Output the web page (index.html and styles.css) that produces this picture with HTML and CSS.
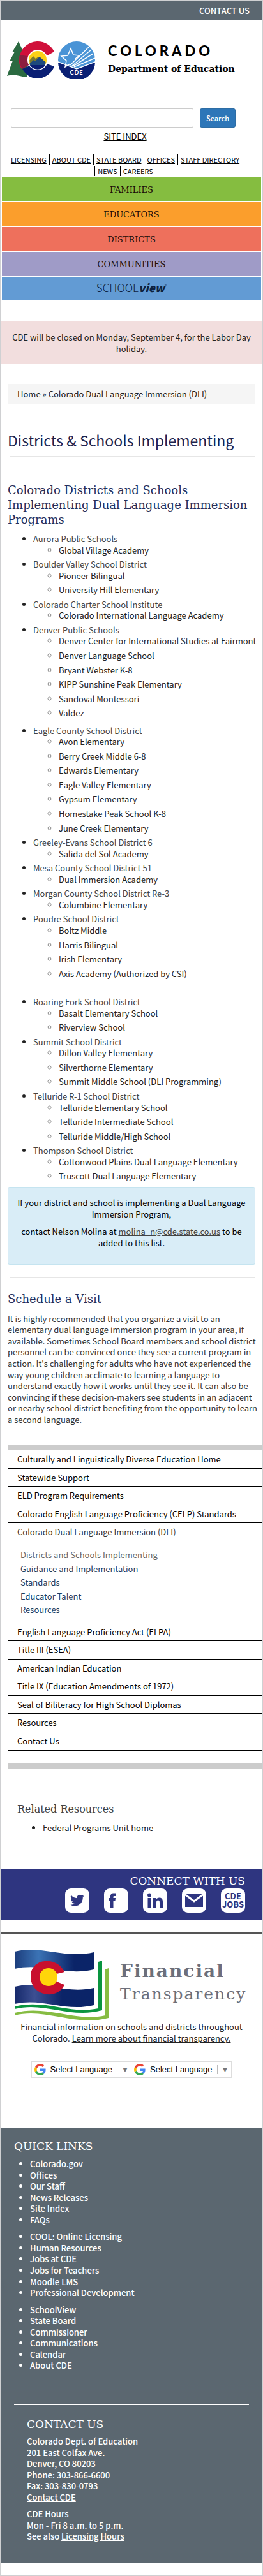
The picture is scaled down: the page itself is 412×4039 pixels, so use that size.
FILE: index.html
```html
<!DOCTYPE html>
<html lang="en">
<head>
<meta charset="utf-8">
<meta name="viewport" content="width=device-width, initial-scale=1">
<title>Districts &amp; Schools Implementing | CDE</title>
<link rel="stylesheet" href="styles.css">
</head>
<body>
<div class="page">
  <div class="topbar"><a href="#contact">CONTACT US</a></div>

  <header class="masthead">
    <a class="brand" href="#" aria-label="Colorado Department of Education">
      <svg class="brand-mark" viewBox="0 0 148 60" width="148" height="60" aria-hidden="true">
        <path fill="#2b6a41" d="M18 1 8 18l4-1L4 32l5-1L0 55c8-2 14-1 20 0l4 1h8V22l-5-6-2 0z"/>
        <path fill="#d0103a" d="M47 1a29 29 0 0 0-28 29c0 6 1 10 4 14l24-14 18-8 9-5A29 29 0 0 0 47 1z"/>
        <path fill="#8c1d3f" d="M20 22a29 29 0 0 0 4 22l10-6-3-14z"/>
        <path fill="#0a1f74" d="M24 44c5 9 14 15 23 15a29 29 0 0 0 27-19l-12-4-15-2z"/>
        <circle cx="48" cy="30" r="16" fill="#fff"/>
        <circle cx="48" cy="30" r="14" fill="#fbd116"/>
        <path fill="#7c7a2c" d="M35 31l6-7 4 4 4-3 7 5 4 4-3 5H38z"/>
        <path fill="#1d4a7d" d="M35 36l7-6 2 2 7-7 10 9-3 6-8 4h-6l-7-4z"/>
        <path fill="#0a1f74" d="M36 38h24a14 14 0 0 1-24 0z"/>
        <circle cx="109" cy="30" r="29" fill="#4a94d6"/>
        <path fill="#0a1f74" d="M80 33l29 11 29-11a29 29 0 0 1-58 0z"/>
        <path fill="none" stroke="#fff" stroke-width="1.5" d="M80 33l29 11 29-11"/>
        <path fill="none" stroke="#fff" stroke-width="1.5" d="M99 36l-8 5 2-10-8-7 10-1 5-11 4 10 9 1-7 6"/>
        <path fill="none" stroke="#fff" stroke-width="1.5" d="M99 38 129 9M101 40l31-26M103 40l32-20M105 41l33-14"/>
        <text class="brand-cde" x="109" y="53" text-anchor="middle">CDE</text>
        <path stroke="#777" stroke-width="1" d="M147.500 0v59"/>
      </svg>
      <span class="brand-words">
        <span class="brand-state">COLORADO</span>
        <span class="brand-dept">Department of Education</span>
      </span>
    </a>
    <form class="search">
      <input class="search-box" type="text" aria-label="Search">
      <button class="search-btn" type="submit">Search</button>
    </form>
    <p class="site-index"><a href="#">SITE INDEX</a></p>
    <nav class="util">
      <a href="#">LICENSING</a><a href="#">ABOUT CDE</a><a href="#">STATE BOARD</a><a href="#">OFFICES</a><a href="#">STAFF DIRECTORY</a><a href="#">NEWS</a><a href="#">CAREERS</a>
    </nav>
  </header>

  <nav class="audience">
    <a class="families" href="#">FAMILIES</a>
    <a class="educators" href="#">EDUCATORS</a>
    <a class="districts" href="#">DISTRICTS</a>
    <a class="communities" href="#">COMMUNITIES</a>
    <a class="schoolview" href="#">SCHOOL<b>view</b><sup>®</sup></a>
  </nav>

  <div class="notice">CDE will be closed on Monday, September 4, for the Labor Day holiday.</div>

  <main class="content">
    <div class="crumbs"><a href="#">Home</a> » <a href="#">Colorado Dual Language Immersion (DLI)</a></div>
    <h1>Districts &amp; Schools Implementing</h1>
    <hr>
    <h2 class="programs">Colorado Districts and Schools Implementing Dual Language Immersion Programs</h2>
    <ul class="district-list">
      <li>Aurora Public Schools
        <ul><li>Global Village Academy</li></ul></li>
      <li>Boulder Valley School District
        <ul><li>Pioneer Bilingual</li><li>University Hill Elementary</li></ul></li>
      <li>Colorado Charter School Institute
        <ul><li>Colorado International Language Academy</li></ul></li>
      <li class="spaced">Denver Public Schools
        <ul><li>Denver Center for International Studies at Fairmont</li><li>Denver Language School</li><li>Bryant Webster K-8</li><li>KIPP Sunshine Peak Elementary</li><li>Sandoval Montessori</li><li>Valdez</li></ul></li>
      <li>Eagle County School District
        <ul><li>Avon Elementary</li><li>Berry Creek Middle 6-8</li><li>Edwards Elementary</li><li>Eagle Valley Elementary</li><li>Gypsum Elementary</li><li>Homestake Peak School K-8</li><li>June Creek Elementary</li></ul></li>
      <li>Greeley-Evans School District 6
        <ul><li>Salida del Sol Academy</li></ul></li>
      <li>Mesa County School District 51
        <ul><li>Dual Immersion Academy</li></ul></li>
      <li>Morgan County School District Re-3
        <ul><li>Columbine Elementary</li></ul></li>
      <li class="split">Poudre School District
        <ul><li>Boltz Middle</li><li>Harris Bilingual</li><li>Irish Elementary</li><li>Axis Academy (Authorized by CSI)</li></ul></li>
      <li>Roaring Fork School District
        <ul><li>Basalt Elementary School</li><li>Riverview School</li></ul></li>
      <li>Summit School District
        <ul><li>Dillon Valley Elementary</li><li>Silverthorne Elementary</li><li>Summit Middle School (DLI Programming)</li></ul></li>
      <li>Telluride R-1 School District
        <ul><li>Telluride Elementary School</li><li>Telluride Intermediate School</li><li>Telluride Middle/High School</li></ul></li>
      <li>Thompson School District
        <ul><li>Cottonwood Plains Dual Language Elementary</li><li>Truscott Dual Language Elementary</li></ul></li>
    </ul>
    <div class="info">
      <p>If your district and school is implementing a Dual Language Immersion Program,</p>
      <p>contact Nelson Molina at <a href="#">molina_n@cde.state.co.us</a> to be added to this list.</p>
    </div>
    <hr>
    <h2 class="visit-title">Schedule a Visit</h2>
    <p class="visit">It is highly recommended that you organize a visit to an elementary dual language immersion program in your area, if available. Sometimes School Board members and school district personnel can be convinced once they see a current program in action. It's challenging for adults who have not experienced the way young children acclimate to learning a language to understand exactly how it works until they see it. It can also be convincing if these decision-makers see students in an adjacent or nearby school district benefiting from the opportunity to learn a second language.</p>
  </main>

  <nav class="side">
    <ul>
      <li><a href="#">Culturally and Linguistically Diverse Education Home</a></li>
      <li><a href="#">Statewide Support</a></li>
      <li><a href="#">ELD Program Requirements</a></li>
      <li><a href="#">Colorado English Language Proficiency (CELP) Standards</a></li>
      <li><a class="open" href="#">Colorado Dual Language Immersion (DLI)</a>
        <ul class="side-sub">
          <li><a class="current" href="#">Districts and Schools Implementing</a></li>
          <li><a href="#">Guidance and Implementation</a></li>
          <li><a href="#">Standards</a></li>
          <li><a href="#">Educator Talent</a></li>
          <li><a href="#">Resources</a></li>
        </ul></li>
      <li><a href="#">English Language Proficiency Act (ELPA)</a></li>
      <li><a href="#">Title III (ESEA)</a></li>
      <li><a href="#">American Indian Education</a></li>
      <li><a href="#">Title IX (Education Amendments of 1972)</a></li>
      <li><a href="#">Seal of Biliteracy for High School Diplomas</a></li>
      <li><a href="#">Resources</a></li>
      <li><a href="#">Contact Us</a></li>
    </ul>
  </nav>

  <section class="related">
    <h3>Related Resources</h3>
    <ul><li><a href="#">Federal Programs Unit home</a></li></ul>
  </section>

  <section class="connect">
    <h3>CONNECT WITH US</h3>
    <div class="social">
      <a href="#" aria-label="Twitter"><svg viewBox="0 0 38 38" width="38" height="38"><rect width="38" height="38" rx="9" fill="#fff"/><path fill="#2e3580" transform="translate(8 7) scale(1.375)" d="M5.026 15c6.038 0 9.341-5.003 9.341-9.334q.002-.211-.006-.422A6.700 6.700 0 0 0 16 3.542a6.700 6.700 0 0 1-1.889.518 3.300 3.300 0 0 0 1.447-1.817 6.500 6.500 0 0 1-2.087.793A3.286 3.286 0 0 0 7.875 6.030a9.320 9.320 0 0 1-6.767-3.429 3.290 3.290 0 0 0 1.018 4.382A3.300 3.300 0 0 1 .64 6.575v.045a3.290 3.290 0 0 0 2.632 3.218 3.200 3.200 0 0 1-.865.115 3 3 0 0 1-.614-.057 3.280 3.280 0 0 0 3.067 2.277A6.600 6.600 0 0 1 .78 13.580a6 6 0 0 1-.78-.045A9.340 9.340 0 0 0 5.026 15"/></svg></a>
      <a href="#" aria-label="Facebook"><svg viewBox="0 0 38 38" width="38" height="38"><rect width="38" height="38" rx="9" fill="#fff"/><path fill="#2e3580" d="M10 30V19H7v-4h3v-2.500C10 9 12 7.500 15 7.500h3V12h-2c-1 0-1.500.5-1.500 1.300V15H18l-.5 4h-3v11z"/></svg></a>
      <a href="#" aria-label="LinkedIn"><svg viewBox="0 0 38 38" width="38" height="38"><rect width="38" height="38" rx="9" fill="#fff"/><circle cx="10" cy="10.500" r="3" fill="#2e3580"/><path fill="#2e3580" d="M7.500 15h5v15h-5zM16 15h4.700v2c1-1.500 2.600-2.400 4.800-2.400 4 0 5.500 2.600 5.500 6.400v9h-5v-8c0-2.100-.6-3.400-2.400-3.400-1.900 0-2.600 1.400-2.600 3.400v8h-5z"/></svg></a>
      <a href="#" aria-label="Email"><svg viewBox="0 0 38 38" width="38" height="38"><rect width="38" height="38" rx="9" fill="#fff"/><rect x="5" y="8" width="28" height="21" fill="#2e3580"/><path d="M4 9l15 11L34 9" fill="none" stroke="#fff" stroke-width="3"/></svg></a>
      <a class="jobs" href="#">CDE<br>JOBS</a>
    </div>
  </section>

  <section class="finance">
    <a class="ft-logo" href="#" aria-label="Financial Transparency">
      <svg viewBox="0 0 148 114" width="148" height="114" aria-hidden="true">
        <defs>
          <linearGradient id="sky" x1="0" x2="1"><stop offset="0" stop-color="#1c3d7c"/><stop offset=".3" stop-color="#3b73b5"/><stop offset=".75" stop-color="#0b2468"/></linearGradient>
          <linearGradient id="sea" x1="0" x2="1"><stop offset="0" stop-color="#15296b"/><stop offset=".25" stop-color="#3d4f92"/><stop offset=".6" stop-color="#0b2468"/></linearGradient>
        </defs>
        <path fill="url(#sky)" d="M1 5C40-6 80 17 125 6v27C80 44 45 22 1 32z"/>
        <path fill="url(#sea)" d="M1 60c44-10 79 12 124 2v27c-45 11-80-12-124-2z"/>
        <path fill="#c8102e" d="M79 37C68 12 26 14 26 44c0 31 42 38 53 13L67 52 57 43l10-3z"/>
        <circle cx="54" cy="45" r="14" fill="#ffd60a"/>
        <path fill="#0a9540" d="M132 21l6-2v78c-50 14-90-14-137-2v-4c48-12 88 13 131 3z"/>
        <path fill="#86bc42" d="M143 33l5-2v78c-55 14-97-16-147-4v-4c50-13 96 15 142 4z"/>
      </svg>
      <span class="ft-words"><b>Financial</b><span>Transparency</span></span>
    </a>
    <p>Financial information on schools and districts throughout Colorado. <a href="#">Learn more about financial transparency.</a></p>
    <div class="translate">
      <button type="button"><svg viewBox="0 0 48 48" width="18" height="18" aria-hidden="true"><path fill="#ea4335" d="M24 9.500c3.540 0 6.710 1.220 9.210 3.600l6.850-6.850C35.900 2.380 30.470 0 24 0 14.620 0 6.510 5.380 2.560 13.220l7.980 6.190C12.430 13.720 17.740 9.500 24 9.500z"/><path fill="#4285f4" d="M46.980 24.550c0-1.570-.15-3.090-.38-4.550H24v9.020h12.940c-.58 2.960-2.260 5.480-4.780 7.180l7.730 6c4.510-4.180 7.090-10.360 7.090-17.650z"/><path fill="#fbbc05" d="M10.530 28.590c-.48-1.450-.76-2.990-.76-4.590s.27-3.140.76-4.590l-7.980-6.190C.92 16.460 0 20.120 0 24c0 3.880.92 7.540 2.560 10.780l7.970-6.190z"/><path fill="#34a853" d="M24 48c6.480 0 11.930-2.130 15.890-5.810l-7.730-6c-2.150 1.450-4.920 2.300-8.160 2.300-6.260 0-11.570-4.220-13.470-9.910l-7.980 6.190C6.510 42.620 14.620 48 24 48z"/></svg><span class="lang">Select Language</span><span class="arrow">▼</span></button>
      <button type="button"><svg viewBox="0 0 48 48" width="18" height="18" aria-hidden="true"><path fill="#ea4335" d="M24 9.500c3.540 0 6.710 1.220 9.210 3.600l6.850-6.850C35.900 2.380 30.470 0 24 0 14.620 0 6.510 5.380 2.560 13.220l7.980 6.190C12.430 13.720 17.740 9.500 24 9.500z"/><path fill="#4285f4" d="M46.980 24.550c0-1.570-.15-3.090-.38-4.550H24v9.020h12.940c-.58 2.960-2.260 5.480-4.780 7.180l7.730 6c4.510-4.180 7.090-10.360 7.090-17.650z"/><path fill="#fbbc05" d="M10.530 28.590c-.48-1.450-.76-2.990-.76-4.590s.27-3.140.76-4.590l-7.980-6.190C.92 16.460 0 20.120 0 24c0 3.880.92 7.540 2.560 10.780l7.970-6.190z"/><path fill="#34a853" d="M24 48c6.480 0 11.930-2.130 15.890-5.810l-7.730-6c-2.150 1.450-4.920 2.300-8.160 2.300-6.260 0-11.570-4.220-13.470-9.910l-7.980 6.190C6.510 42.620 14.620 48 24 48z"/></svg><span class="lang">Select Language</span><span class="arrow">▼</span></button>
    </div>
  </section>

  <footer class="footer" id="contact">
    <h3>QUICK LINKS</h3>
    <ul>
      <li><a href="#">Colorado.gov</a></li><li><a href="#">Offices</a></li><li><a href="#">Our Staff</a></li><li><a href="#">News Releases</a></li><li><a href="#">Site Index</a></li><li><a href="#">FAQs</a></li>
    </ul>
    <ul>
      <li><a href="#">COOL: Online Licensing</a></li><li><a href="#">Human Resources</a></li><li><a href="#">Jobs at CDE</a></li><li><a href="#">Jobs for Teachers</a></li><li><a href="#">Moodle LMS</a></li><li><a href="#">Professional Development</a></li>
    </ul>
    <ul>
      <li><a href="#">SchoolView</a></li><li><a href="#">State Board</a></li><li><a href="#">Commissioner</a></li><li><a href="#">Communications</a></li><li><a href="#">Calendar</a></li><li><a href="#">About CDE</a></li>
    </ul>
    <div class="address">
      <h3>CONTACT US</h3>
      <p>Colorado Dept. of Education<br>201 East Colfax Ave.<br>Denver, CO 80203<br>Phone: 303-866-6600<br>Fax: 303-830-0793<br><a href="#">Contact CDE</a></p>
      <p>CDE Hours<br>Mon - Fri 8 a.m. to 5 p.m.<br>See also <a href="#">Licensing Hours</a></p>
    </div>
  </footer>
</div>
</body>
</html>
```
FILE: styles.css
```css
* { box-sizing: border-box; }

body {
  margin: 0;
  background: #fff;
  color: #222;
  font-family: "Noto Sans CJK SC", "Noto Sans", sans-serif;
  font-size: 13px;
  line-height: 1.35;
}

a { color: inherit; text-decoration: none; }
p, h1, h2, h3, ul { margin: 0; padding: 0; }

.page { border: 2px solid #cfd0d2; padding-bottom: 19px; }

h2, h3, .audience, .brand-dept, .ft-words {
  font-family: "DejaVu Serif", "Liberation Serif", serif;
}

/* Top bar and masthead */
.topbar {
  padding: 6px 19px;
  background: #5b6770;
  color: #fff;
  font-weight: 500;
  text-align: right;
}

.masthead { padding: 32px 9px 0; }

.brand { display: flex; gap: 10px; color: #000; }
.brand-mark { flex: none; }
.brand-cde { fill: #fff; font: 700 9px Lato, sans-serif; letter-spacing: 1px; }
.brand-words { display: flex; flex-direction: column; gap: 6px; padding-top: 3px; white-space: nowrap; }
.brand-state { font: 900 22px/26px Lato, sans-serif; letter-spacing: 5px; }
.brand-dept { font-size: 14px; line-height: 18px; font-weight: 700; }

.search { display: flex; gap: 10px; margin: 46px 32px 0 6px; }
.search-box {
  flex: 1;
  min-width: 0;
  height: 30px;
  border: 1px solid #ccc;
  border-radius: 2px;
}
.search-btn {
  width: 56px;
  border: 1px solid #2e6da4;
  border-radius: 3px;
  background: #2d76b8;
  color: #fff;
  font: 500 11px/18px "Noto Sans CJK SC", sans-serif;
  padding: 0;
}

.site-index { margin: 5px 20px 0 0; text-align: center; color: #000; }
.site-index a, .util a { text-decoration: underline; }

.util {
  display: flex;
  flex-wrap: wrap;
  justify-content: center;
  margin: 20px 12px 0 -8px;
  color: #000;
  font-size: 11px;
  line-height: 16px;
  row-gap: 2px;
}
.util a { padding: 0 4px; }
.util a + a { border-left: 1px solid #000; }

/* Audience bars */
.audience { display: grid; gap: 2px; padding: 2px 1px 0; }
.audience a {
  padding: 10px 0 7px;
  color: #1c0d08;
  font-size: 13px;
  line-height: 20px;
  text-align: center;
}
.families { background: #85bd40; }
.educators { background: #fb9e2c; }
.districts { background: #ee705c; }
.communities { background: #9f9bc7; }
.audience .schoolview {
  padding: 7px 0 10px;
  background: #629bd4;
  color: #0d2240;
  font: 300 17px/20px "Noto Sans CJK SC", sans-serif;
}
.schoolview b { font-weight: 900; font-style: italic; }
.schoolview sup { font-size: 7px; line-height: 1; }

.notice {
  margin-top: 33px;
  padding: 16px 14px 15px;
  background: #f2dede;
  line-height: 18px;
  text-align: center;
}

/* Main column */
.content { padding: 31px 10px 0; }

.crumbs { padding: 7px 15px; background: #f5f5f5; line-height: 18px; }

h1 {
  margin-top: 41px;
  color: #1c2350;
  font-size: 23px;
  line-height: 30px;
  font-weight: 400;
}
hr { height: 1px; margin: 10px 0 0 3px; border: 0; background: #e6e6e6; }

h2 { color: #262f5c; font-size: 18px; line-height: 23px; font-weight: 400; }
.programs { margin-top: 41px; }

.district-list { margin: 10px -10px 0 0; padding-left: 40px; color: #444; }
.district-list > li::marker { color: #222; }
.district-list ul { padding-left: 40px; color: #222; list-style: circle; }
.district-list ul li { padding-bottom: 5px; }
.district-list ul li::marker { color: #888; }
.district-list .spaced { padding-bottom: 5px; }
.district-list .split { padding-bottom: 22px; }

.info {
  margin-top: 3px;
  padding: 15px 10px;
  border: 1px solid #c5e4f0;
  border-radius: 3px;
  background: #d9edf7;
  color: #000;
  line-height: 18px;
  text-align: center;
}
.info p { margin-bottom: 9px; }
.info a { color: #444; text-decoration: underline; }
.info + hr { margin-top: 20px; }

.visit-title { margin-top: 21px; }
.visit { margin: 11px -10px 0 0; color: #333; }

/* Section navigation */
.side {
  margin: 31px 0 0 10px;
  padding-bottom: 20px;
  border: solid #ccc;
  border-width: 9px 0;
  color: #000;
}
.side ul { list-style: none; }
.side > ul > li { padding: 5px 15px; border-bottom: 1px solid #000; }
.side .open { color: #333; }
.side .side-sub { padding: 16px 5px 4px; color: #1d3d5f; }
.side-sub li { padding: 2px 0; }
.side-sub .current { color: #666; }

.related { padding: 51px 25px 57px; }
.related h3 { color: #444; font-size: 16px; line-height: 24px; font-weight: 400; }
.related ul { margin-top: 8px; padding-left: 40px; }
.related a { text-decoration: underline; }

/* Connect band */
.connect { padding: 7px 26px 11px; background: #2e3580; color: #fff; }
.connect h3 { font-size: 17px; line-height: 23px; font-weight: 400; text-align: right; }
.social { display: flex; justify-content: flex-end; gap: 23px; }
.social svg { display: block; }
.jobs {
  width: 38px;
  height: 38px;
  padding-top: 5px;
  border-radius: 9px;
  background: #fff;
  color: #2e3580;
  font-size: 13px;
  line-height: 13px;
  font-weight: 700;
  text-align: center;
}

/* Financial transparency */
.finance {
  margin-top: 20px;
  padding: 22px 20px 79px;
  border-top: 3px solid #555;
  text-align: center;
  line-height: 18px;
}
.ft-logo { display: flex; gap: 18px; }
.ft-logo svg { flex: none; }
.ft-words {
  display: flex;
  flex-direction: column;
  padding-top: 18px;
  color: #6c6f7b;
  font-size: 25px;
  line-height: 36px;
  letter-spacing: 2px;
  text-align: left;
}
.ft-words b { font-size: 28px; }
.finance p a { text-decoration: underline; }

.translate {
  display: flex;
  width: max-content;
  margin: 27px auto 0;
  padding: 0 4px;
  gap: 8px;
  border: 1px solid #ddd;
}
.translate button {
  display: flex;
  align-items: center;
  gap: 7px;
  padding: 3px 0;
  border: 0;
  background: none;
  color: #000;
  font: 13px/18px "Liberation Sans", Arial, sans-serif;
}
.arrow { padding-left: 6px; border-left: 1px solid #bbb; color: #777; font-size: 12px; line-height: 14px; }

/* Footer */
.footer { padding: 16px 20px 33px; background: #5b6770; color: #fff; font-weight: 500; }
.footer h3 { font-size: 17px; line-height: 24px; font-weight: 400; }
.footer ul { margin-bottom: 9px; padding-left: 25px; }
.footer h3 + ul { margin-top: 7px; }
.address { margin-top: 51px; padding: 18px 20px 0; border-top: 2px solid #fff; }
.address p { margin-top: 9px; }
.address h3 + p { margin-top: 6px; }
.address a { text-decoration: underline; }
```
